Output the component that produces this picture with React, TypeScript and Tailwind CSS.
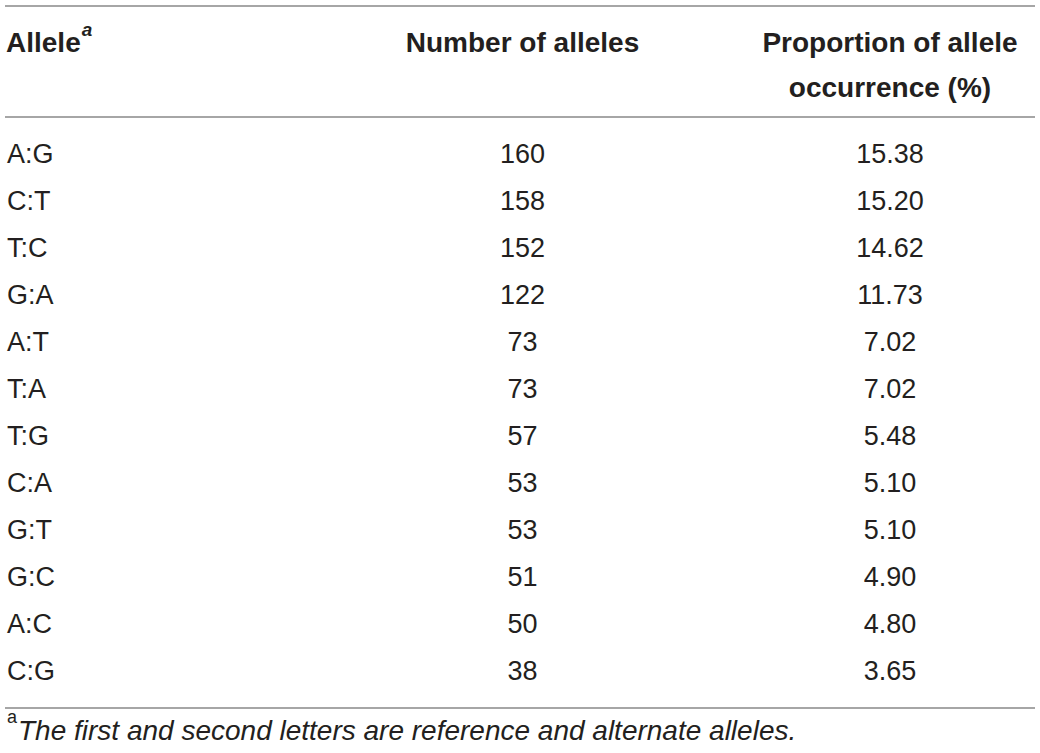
const rows: [string, string, string][] = [
  ['A:G', '160', '15.38'],
  ['C:T', '158', '15.20'],
  ['T:C', '152', '14.62'],
  ['G:A', '122', '11.73'],
  ['A:T', '73', '7.02'],
  ['T:A', '73', '7.02'],
  ['T:G', '57', '5.48'],
  ['C:A', '53', '5.10'],
  ['G:T', '53', '5.10'],
  ['G:C', '51', '4.90'],
  ['A:C', '50', '4.80'],
  ['C:G', '38', '3.65'],
]

export default function App() {
  return (
    <div className="w-[1040px] h-[753px] bg-white px-[5px] pt-[5px] text-[#231f20] font-['Liberation_Sans',Arial,sans-serif] overflow-hidden">
      {/* header */}
      <div className="grid grid-cols-[340px_355px_1fr] border-t-2 border-b-2 border-[#a6a6a6] pt-[13px] pb-[6px] text-[28px] font-bold leading-[45px]">
        <div className="pl-[1px]">
          Allele<sup className="italic text-[19px] font-bold align-[7px] pl-[1px]">a</sup>
        </div>
        <div className="text-center">Number of alleles</div>
        <div className="text-center pl-[45px]">
          Proportion of allele
          <br />
          occurrence (%)
        </div>
      </div>

      {/* body */}
      <div className="pt-[13px] pb-[12px] border-b-2 border-[#a6a6a6] text-[27px] leading-[47px]">
        {rows.map(([allele, count, pct]) => (
          <div key={allele + count} className="grid grid-cols-[340px_355px_1fr]">
            <div className="pl-[2px]">{allele}</div>
            <div className="text-center">{count}</div>
            <div className="text-center pl-[45px]">{pct}</div>
          </div>
        ))}
      </div>

      {/* footnote */}
      <p className="pl-[2px] pt-[6px] text-[28px] leading-[32px] whitespace-nowrap">
        <sup className="text-[18px] align-[8px]">a</sup>
        <span className="italic pl-[1px]">The first and second letters are reference and alternate alleles.</span>
      </p>
    </div>
  )
}
